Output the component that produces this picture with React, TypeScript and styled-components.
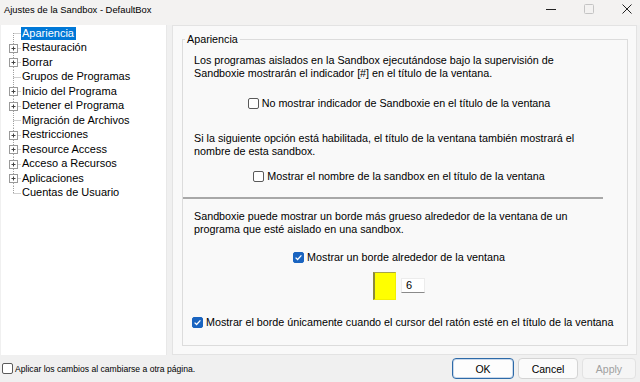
import styled, { createGlobalStyle } from 'styled-components'

const GlobalStyle = createGlobalStyle`
  html, body {
    margin: 0;
    padding: 0;
    background: #f0f0f0;
  }
  body {
    font-family: "Liberation Sans", Arial, sans-serif;
    color: #000;
  }
`

const Window = styled.div`
  width: 640px;
  height: 382px;
  display: flex;
  flex-direction: column;
  background: #f0f0f0;
  overflow: hidden;
`

const TitleBar = styled.div`
  height: 25px;
  display: flex;
  align-items: center;
  gap: 28px;
  padding-right: 8px;
  background: #f3f2f1;

  .title {
    flex: 1;
    padding-left: 4px;
    font-size: 9.4px;
    margin-top: -7px;
  }
`

const WinButton = styled.div<{ $dim?: boolean }>`
  width: 10px;
  height: 10px;
  display: flex;
  margin-top: -7px;
  color: ${(p) => (p.$dim ? '#c4c4c4' : '#222')};
`

const Body = styled.div`
  flex: 1;
  display: flex;
  gap: 5px;
  padding: 0 3px 0 1px;
  min-height: 0;
`

const TreePanel = styled.ul`
  width: 166px;
  box-sizing: border-box;
  margin: 0;
  padding: 1px 0 0 4px;
  list-style: none;
  background: #fff;
  border-right: 1px solid #e8e8e8;
  font-size: 11px;
`

const TreeRow = styled.li`
  display: flex;
  align-items: center;
  height: 14.5px;
`

const TreeLabel = styled.span<{ $selected?: boolean }>`
  padding: 0 2px 0 1px;
  line-height: 13px;
  white-space: nowrap;
  background: ${(p) => (p.$selected ? '#0078d7' : 'transparent')};
  color: ${(p) => (p.$selected ? '#fff' : '#000')};
`

const SettingsPanel = styled.div`
  flex: 1;
  background: #f9f9f9;
  border: 1px solid #e3e3e3;
  padding: 7px 8px 10px 9px;
  display: flex;
  flex-direction: column;
`

const GroupBox = styled.fieldset`
  margin: 0;
  padding: 0 0 16px 0;
  border: 1px solid #dcdcdc;
  font-size: 10.75px;
  flex: 1;

  legend {
    margin-left: 2px;
    padding: 0 2px;
    line-height: 13px;
  }
`

const Para = styled.p<{ $top: number }>`
  margin: ${(p) => p.$top}px 0 0 0;
  padding: 0 30px 0 11px;
  line-height: 13px;
`

const OptionRow = styled.div<{ $top: number; $center?: boolean; $shift?: number }>`
  display: flex;
  align-items: center;
  justify-content: ${(p) => (p.$center ? 'center' : 'flex-start')};
  gap: 3px;
  margin-top: ${(p) => p.$top}px;
  padding: ${(p) => (p.$center ? '0' : '0 0 0 9px')};
  transform: translateX(${(p) => p.$shift ?? 0}px);
  line-height: 13px;
  white-space: nowrap;
`

const Box = styled.span<{ $checked?: boolean }>`
  width: 11px;
  height: 11px;
  box-sizing: border-box;
  border-radius: 2px;
  border: 1px solid ${(p) => (p.$checked ? '#1a64c0' : '#5a5a5a')};
  background: ${(p) => (p.$checked ? '#1a64c0' : '#fff')};
  display: inline-flex;
  align-items: center;
  justify-content: center;
  flex: none;
`

const Separator = styled.div`
  margin: 14.5px 24px 0 0;
  height: 2px;
  background: #a8a8a8;
`

const ColorRow = styled.div`
  margin-top: 8px;
  display: flex;
  justify-content: center;
  align-items: center;
  gap: 5px;
  transform: translateX(-6px);
`

const ColorSwatch = styled.div`
  width: 23px;
  height: 28px;
  box-sizing: border-box;
  background: #ffff00;
  border-left: 2px solid #8c8a3c;
  border-top: 1px solid #a6a44a;
  border-right: 1px solid #f2ef00;
  border-bottom: 1px solid #f2ef00;
`

const SpinInput = styled.div`
  width: 24px;
  height: 15px;
  box-sizing: border-box;
  background: #fff;
  border: 1px solid #ececec;
  border-bottom: 1px solid #8a8a8a;
  padding-left: 4px;
  font-size: 11px;
  line-height: 13px;
`

const Footer = styled.div`
  height: 27px;
  display: flex;
  align-items: center;
  padding: 0 4px 0 2px;
  font-size: 8.6px;

  .apply-all {
    display: flex;
    align-items: center;
    gap: 2px;
    flex: 1;
  }
`

const DialogButton = styled.button<{ $default?: boolean; $width: number }>`
  width: ${(p) => p.$width}px;
  height: 21px;
  margin-left: 4px;
  border-radius: 4px;
  font-family: "Liberation Sans", Arial, sans-serif;
  font-size: 10.5px;
  background: ${(p) => (p.$default ? '#fdfdfd' : '#fbfbfb')};
  border: 1px solid ${(p) => (p.$default ? '#2d6aa8' : '#d4d4d4')};
  box-shadow: ${(p) => (p.$default ? 'inset 0 0 0 1px #c9d8ea' : 'none')};
  color: #000;
  padding: 0;

  &:disabled {
    color: #a0a0a0;
    background: #f5f5f5;
    border-color: #e2e2e2;
  }
`

function Check({ checked }: { checked?: boolean }) {
  return (
    <Box $checked={checked}>
      {checked && (
        <svg width="9" height="9" viewBox="0 0 9 9">
          <path d="M1.6 4.6 L3.6 6.5 L7.4 2.4" fill="none" stroke="#fff" strokeWidth="1.3" />
        </svg>
      )}
    </Box>
  )
}

type TreeItem = { label: string; expandable?: boolean; selected?: boolean }

const treeItems: TreeItem[] = [
  { label: 'Apariencia', selected: true },
  { label: 'Restauración', expandable: true },
  { label: 'Borrar', expandable: true },
  { label: 'Grupos de Programas' },
  { label: 'Inicio del Programa', expandable: true },
  { label: 'Detener el Programa', expandable: true },
  { label: 'Migración de Archivos' },
  { label: 'Restricciones', expandable: true },
  { label: 'Resource Access', expandable: true },
  { label: 'Acceso a Recursos', expandable: true },
  { label: 'Aplicaciones', expandable: true },
  { label: 'Cuentas de Usuario' },
]

// trazo de la rama del árbol: línea vertical, rama horizontal y el [+]
function Branch({ first, last, expandable }: { first: boolean; last: boolean; expandable?: boolean }) {
  const top = first ? 7 : 0
  const bottom = last ? 7 : 14.5
  return (
    <svg width="16" height="14.5" viewBox="0 0 16 14.5" style={{ flex: 'none' }}>
      <line x1="8.5" y1={top} x2="8.5" y2={bottom} stroke="#a0a0a0" strokeDasharray="1 1" />
      <line x1="8.5" y1="7.5" x2="16" y2="7.5" stroke="#a0a0a0" strokeDasharray="1 1" />
      {expandable && (
        <g>
          <rect x="4.5" y="3.5" width="8" height="8" fill="#fff" stroke="#9a9a9a" />
          <line x1="6.5" y1="7.5" x2="10.5" y2="7.5" stroke="#444" />
          <line x1="8.5" y1="5.5" x2="8.5" y2="9.5" stroke="#444" />
        </g>
      )}
    </svg>
  )
}

export default function App() {
  return (
    <Window>
      <GlobalStyle />
      <TitleBar>
        <span className="title">Ajustes de la Sandbox - DefaultBox</span>
        <WinButton>
          <svg width="10" height="10" viewBox="0 0 10 10">
            <line x1="0" y1="5.5" x2="10" y2="5.5" stroke="currentColor" />
          </svg>
        </WinButton>
        <WinButton $dim>
          <svg width="10" height="10" viewBox="0 0 10 10">
            <rect x="0.5" y="0.5" width="9" height="9" rx="1" fill="none" stroke="currentColor" />
          </svg>
        </WinButton>
        <WinButton>
          <svg width="10" height="10" viewBox="0 0 10 10">
            <path d="M0.5 0.5 L9.5 9.5 M9.5 0.5 L0.5 9.5" stroke="currentColor" />
          </svg>
        </WinButton>
      </TitleBar>

      <Body>
        <TreePanel>
          {treeItems.map((item, i) => (
            <TreeRow key={item.label}>
              <Branch first={i === 0} last={i === treeItems.length - 1} expandable={item.expandable} />
              <TreeLabel $selected={item.selected}>{item.label}</TreeLabel>
            </TreeRow>
          ))}
        </TreePanel>

        <SettingsPanel>
          <GroupBox>
            <legend>Apariencia</legend>
            <Para $top={7.5}>
              Los programas aislados en la Sandbox ejecutándose bajo la supervisión de Sandboxie mostrarán el
              indicador [#] en el título de la ventana.
            </Para>
            <OptionRow $top={17} $center $shift={-6}>
              <Check />
              No mostrar indicador de Sandboxie en el título de la ventana
            </OptionRow>
            <Para $top={22}>
              Si la siguiente opción está habilitada, el título de la ventana también mostrará el nombre de esta
              sandbox.
            </Para>
            <OptionRow $top={12} $center $shift={-6}>
              <Check />
              Mostrar el nombre de la sandbox en el título de la ventana
            </OptionRow>
            <Separator />
            <Para $top={10.5}>
              Sandboxie puede mostrar un borde más grueso alrededor de la ventana de un programa que esté aislado
              en una sandbox.
            </Para>
            <OptionRow $top={15} $center $shift={-6}>
              <Check checked />
              Mostrar un borde alrededor de la ventana
            </OptionRow>
            <ColorRow>
              <ColorSwatch />
              <SpinInput>6</SpinInput>
            </ColorRow>
            <OptionRow $top={16.5}>
              <Check checked />
              Mostrar el borde únicamente cuando el cursor del ratón esté en el título de la ventana
            </OptionRow>
          </GroupBox>
        </SettingsPanel>
      </Body>

      <Footer>
        <label className="apply-all">
          <Check />
          Aplicar los cambios al cambiarse a otra página.
        </label>
        <DialogButton $default $width={62}>OK</DialogButton>
        <DialogButton $width={60}>Cancel</DialogButton>
        <DialogButton $width={54} disabled>
          Apply
        </DialogButton>
      </Footer>
    </Window>
  )
}
